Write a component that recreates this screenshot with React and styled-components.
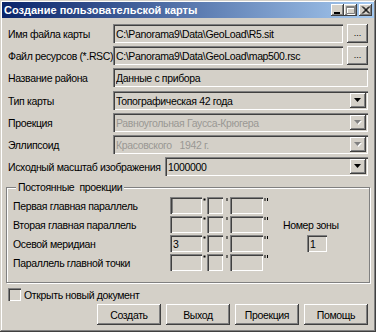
import React from "react";
import styled, { createGlobalStyle, css } from "styled-components";

const GlobalStyle = createGlobalStyle`
  html, body { margin: 0; padding: 0; background: #d4d0c8; }
  body {
    font-family: "Liberation Sans", Arial, sans-serif;
    font-size: 10.5px;
    letter-spacing: -0.35px;
    color: #000;
  }
  * { box-sizing: border-box; }
`;

const sunken = css`
  box-shadow: inset 1px 1px 0 #808080, inset 2px 2px 0 #404040,
    inset -1px -1px 0 #ffffff, inset -2px -2px 0 #d4d0c8;
`;

const raised = css`
  box-shadow: inset -1px -1px 0 #404040, inset 1px 1px 0 #ffffff,
    inset -2px -2px 0 #808080, inset 2px 2px 0 #d4d0c8;
`;

const Window = styled.div`
  width: 376px;
  height: 332px;
  background: #d4d0c8;
  box-shadow: inset -1px -1px 0 #404040, inset 1px 1px 0 #d4d0c8,
    inset -2px -2px 0 #808080, inset 2px 2px 0 #ffffff;
  display: flex;
  flex-direction: column;
`;

const TitleBar = styled.div`
  margin: 2px 2px 0;
  height: 16px;
  background: linear-gradient(to right, #0a246a, #a6caf0);
  display: flex;
  align-items: center;
  padding: 0 2px;
  color: #fff;
  font-weight: bold;
  font-size: 11px;
  letter-spacing: 0;
`;

const TitleText = styled.span`
  flex: 1;
  white-space: nowrap;
`;

const TitleButtons = styled.div`
  display: flex;
  gap: ${(p) => p.$gap || 0}px;
`;

const CaptionButton = styled.div`
  width: 13px;
  height: 12px;
  background: #d4d0c8;
  ${raised};
  display: flex;
  align-items: center;
  justify-content: center;
`;

const Body = styled.div`
  padding: 6px 8px 0 8px;
  display: flex;
  flex-direction: column;
`;

const Form = styled.div`
  display: flex;
  flex-direction: column;
  gap: 3px;
`;

const Row = styled.div`
  display: flex;
  align-items: center;
  height: 19px;
  gap: 4px;
  margin-top: ${(p) => p.$mt || 0}px;
`;

const Label = styled.span`
  width: ${(p) => p.$w || 101}px;
  flex: none;
  white-space: nowrap;
`;

const Field = styled.div`
  flex: 1;
  height: 19px;
  background: #d4d0c8;
  ${sunken};
  display: flex;
  align-items: center;
  padding: 0 2px 0 3px;
  white-space: nowrap;
  overflow: hidden;
  color: ${(p) => (p.$disabled ? "#9a9894" : "#000")};
`;

const FieldText = styled.span`
  flex: 1;
  white-space: pre;
  overflow: hidden;
`;

const BrowseButton = styled.div`
  width: 21px;
  height: 19px;
  flex: none;
  background: #d4d0c8;
  ${raised};
  display: flex;
  align-items: flex-end;
  justify-content: center;
  padding-bottom: 5px;
  font-size: 9px;
  line-height: 9px;
  letter-spacing: 0;
  color: #000;
`;

const DropButton = styled.div`
  width: 16px;
  height: 15px;
  flex: none;
  background: #d4d0c8;
  ${raised};
  display: flex;
  align-items: center;
  justify-content: center;
`;

const GroupBox = styled.div`
  position: relative;
  margin: 11px -2px 0;
  border: 1px solid #808080;
  box-shadow: inset 1px 1px 0 #ffffff, 1px 1px 0 #ffffff;
  padding: 9px 6px 11px 6px;
  display: flex;
`;

const Legend = styled.span`
  position: absolute;
  top: -7px;
  left: 9px;
  padding: 0 2px;
  background: #d4d0c8;
  white-space: pre;
  line-height: 13px;
`;

const DmsGrid = styled.div`
  display: grid;
  grid-template-columns: 157px 32px 5px 16px 7px 33px 6px;
  grid-auto-rows: 17px;
  row-gap: 2px;
  align-items: center;
`;

const GroupLabel = styled.span`
  white-space: nowrap;
`;

const SmallBox = styled.div`
  height: 17px;
  background: #d4d0c8;
  ${sunken};
  ${(p) =>
    p.$caret &&
    css`
      box-shadow: inset 1px 1px 0 #808080, inset 2px 2px 0 #404040,
        inset -1px -1px 0 #ffffff, inset 3px 0 0 #808080;
    `}
  display: flex;
  align-items: center;
  padding-left: 3px;
  width: ${(p) => (p.$w ? `${p.$w}px` : "auto")};
`;

const Sep = styled.span`
  align-self: start;
  display: flex;
  justify-content: center;
  padding-top: 1px;
`;

const ZoneCol = styled.div`
  margin-left: 14px;
  display: grid;
  grid-template-rows: 17px 17px 17px 17px;
  row-gap: 2px;
  align-items: center;
`;

const ZoneLabel = styled.span`
  grid-row: 2;
  white-space: nowrap;
`;

const ZoneBox = styled(SmallBox)`
  grid-row: 3;
  margin-left: 24px;
`;

const CheckRow = styled.label`
  display: flex;
  align-items: center;
  gap: 3px;
  margin-top: 5px;
  height: 13px;
`;

const CheckBox = styled.span`
  width: 13px;
  height: 13px;
  background: #d4d0c8;
  ${sunken};
`;

const ButtonRow = styled.div`
  display: flex;
  justify-content: flex-end;
  gap: 5px;
  margin-top: 3px;
`;

const PushButton = styled.div`
  width: 64px;
  height: 21px;
  background: #d4d0c8;
  ${raised};
  display: flex;
  align-items: center;
  justify-content: center;
`;

const Arrow = ({ disabled }) => (
  <svg width="8" height="5" viewBox="0 0 8 5">
    {disabled && <polygon points="1,1 8,1 4.5,5" fill="#fff" />}
    <polygon points="0,0 7,0 3.5,4" fill={disabled ? "#808080" : "#000"} />
  </svg>
);

const Select = ({ value, disabled }) => (
  <Field $disabled={disabled}>
    <FieldText>{value}</FieldText>
    <DropButton>
      <Arrow disabled={disabled} />
    </DropButton>
  </Field>
);

const MinIcon = () => (
  <svg width="9" height="9" viewBox="0 0 9 9">
    <rect x="1" y="6" width="6" height="2" fill="#000" />
  </svg>
);

const MaxIcon = () => (
  <svg width="9" height="9" viewBox="0 0 9 9">
    <g transform="translate(1,1)">
      <path d="M0.5 0.5 H8.5 V7.5 H0.5 Z M0 1.5 H9" stroke="#fff" fill="none" />
    </g>
    <path d="M0.5 0.5 H8.5 V7.5 H0.5 Z M0 1.5 H9" stroke="#808080" fill="none" />
  </svg>
);

const CloseIcon = () => (
  <svg width="9" height="8" viewBox="0 0 9 8">
    <path d="M1 0.5 L8 7.5 M2 0.5 L9 7.5 M8 0.5 L1 7.5 M9 0.5 L2 7.5" stroke="#000" strokeWidth="1" />
  </svg>
);

/* small tick marks after the degree / minute / second boxes */
const DegMark = () => (
  <svg width="3" height="3" viewBox="0 0 3 3">
    <rect x="0.5" y="0.5" width="2" height="2" fill="#000" />
  </svg>
);
const MinMark = () => (
  <svg width="2" height="4" viewBox="0 0 2 4">
    <rect x="0.5" y="0" width="1" height="3" fill="#000" />
  </svg>
);
const SecMark = () => (
  <svg width="5" height="4" viewBox="0 0 5 4">
    <rect x="0.5" y="0" width="1" height="3" fill="#000" />
    <rect x="3" y="0" width="1" height="3" fill="#000" />
  </svg>
);

const dmsRows = [
  { label: "Первая главная параллель", deg: "", caret: true },
  { label: "Вторая главная параллель", deg: "" },
  { label: "Осевой меридиан", deg: "3" },
  { label: "Параллель главной точки", deg: "" },
];

export default function App() {
  return (
    <>
      <GlobalStyle />
      <Window>
        <TitleBar>
          <TitleText>Создание пользовательской карты</TitleText>
          <TitleButtons $gap={2}>
            <TitleButtons>
              <CaptionButton>
                <MinIcon />
              </CaptionButton>
              <CaptionButton>
                <MaxIcon />
              </CaptionButton>
            </TitleButtons>
            <CaptionButton>
              <CloseIcon />
            </CaptionButton>
          </TitleButtons>
        </TitleBar>
        <Body>
          <Form>
            <Row>
              <Label>Имя файла карты</Label>
              <Field>
                <FieldText>C:\Panorama9\Data\GeoLoad\R5.sit</FieldText>
              </Field>
              <BrowseButton>...</BrowseButton>
            </Row>
            <Row>
              <Label>Файл ресурсов (*.RSC)</Label>
              <Field>
                <FieldText>C:\Panorama9\Data\GeoLoad\map500.rsc</FieldText>
              </Field>
              <BrowseButton>...</BrowseButton>
            </Row>
            <Row>
              <Label>Название района</Label>
              <Field>
                <FieldText>Данные с прибора</FieldText>
              </Field>
            </Row>
            <Row $mt={1}>
              <Label>Тип карты</Label>
              <Select value="Топографическая 42 года" />
            </Row>
            <Row>
              <Label>Проекция</Label>
              <Select value="Равноугольная Гаусса-Крюгера" disabled />
            </Row>
            <Row>
              <Label>Эллипсоид</Label>
              <Select value="Красовского   1942 г." disabled />
            </Row>
            <Row>
              <Label $w={153}>Исходный масштаб изображения</Label>
              <Select value="1000000" />
            </Row>
          </Form>

          <GroupBox>
            <Legend>Постоянные  проекции</Legend>
            <DmsGrid>
              {dmsRows.map((r) => (
                <React.Fragment key={r.label}>
                  <GroupLabel>{r.label}</GroupLabel>
                  <SmallBox $caret={r.caret}>{r.deg}</SmallBox>
                  <Sep>
                    <DegMark />
                  </Sep>
                  <SmallBox />
                  <Sep>
                    <MinMark />
                  </Sep>
                  <SmallBox />
                  <Sep>
                    <SecMark />
                  </Sep>
                </React.Fragment>
              ))}
            </DmsGrid>
            <ZoneCol>
              <ZoneLabel>Номер зоны</ZoneLabel>
              <ZoneBox $w={20}>1</ZoneBox>
            </ZoneCol>
          </GroupBox>

          <CheckRow>
            <CheckBox />
            <span>Открыть новый документ</span>
          </CheckRow>

          <ButtonRow>
            <PushButton>Создать</PushButton>
            <PushButton>Выход</PushButton>
            <PushButton>Проекция</PushButton>
            <PushButton>Помощь</PushButton>
          </ButtonRow>
        </Body>
      </Window>
    </>
  );
}
